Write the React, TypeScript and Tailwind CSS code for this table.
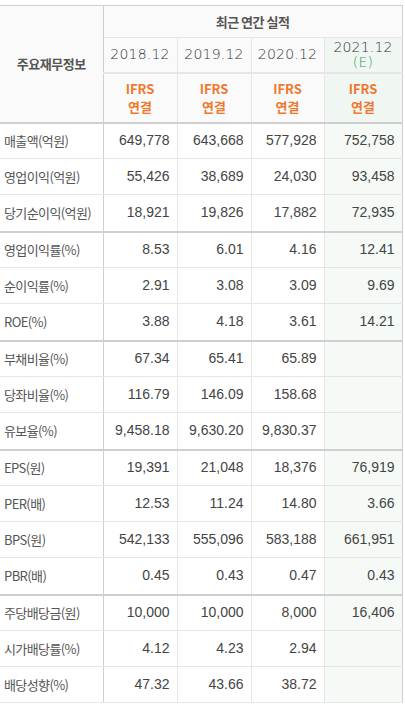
const FONT_KR = { fontFamily: '"Noto Sans CJK KR", "Noto Sans", sans-serif' };
const FONT_YEAR = { fontFamily: '"DejaVu Sans", sans-serif', fontWeight: 300 };

type Row = { label: string; values: string[]; lastInGroup?: boolean };

const rows: Row[] = [
  { label: "매출액(억원)", values: ["649,778", "643,668", "577,928", "752,758"] },
  { label: "영업이익(억원)", values: ["55,426", "38,689", "24,030", "93,458"] },
  { label: "당기순이익(억원)", values: ["18,921", "19,826", "17,882", "72,935"], lastInGroup: true },
  { label: "영업이익률(%)", values: ["8.53", "6.01", "4.16", "12.41"] },
  { label: "순이익률(%)", values: ["2.91", "3.08", "3.09", "9.69"] },
  { label: "ROE(%)", values: ["3.88", "4.18", "3.61", "14.21"], lastInGroup: true },
  { label: "부채비율(%)", values: ["67.34", "65.41", "65.89", ""] },
  { label: "당좌비율(%)", values: ["116.79", "146.09", "158.68", ""] },
  { label: "유보율(%)", values: ["9,458.18", "9,630.20", "9,830.37", ""], lastInGroup: true },
  { label: "EPS(원)", values: ["19,391", "21,048", "18,376", "76,919"] },
  { label: "PER(배)", values: ["12.53", "11.24", "14.80", "3.66"] },
  { label: "BPS(원)", values: ["542,133", "555,096", "583,188", "661,951"] },
  { label: "PBR(배)", values: ["0.45", "0.43", "0.47", "0.43"], lastInGroup: true },
  { label: "주당배당금(원)", values: ["10,000", "10,000", "8,000", "16,406"] },
  { label: "시가배당률(%)", values: ["4.12", "4.23", "2.94", ""] },
  { label: "배당성향(%)", values: ["47.32", "43.66", "38.72", ""] },
];

const years = ["2018.12", "2019.12", "2020.12"];

export default function App() {
  return (
    <div className="bg-white w-[405px] h-[707px] pt-[5px]" style={FONT_KR}>
      <table className="table-fixed border-collapse w-[402px] border-t border-r border-[#cfcfcf]">
        <colgroup>
          <col className="w-[103px]" />
          <col className="w-[74px]" />
          <col className="w-[74px]" />
          <col className="w-[73px]" />
          <col className="w-[78px]" />
        </colgroup>
        <thead>
          <tr className="h-[32px]">
            <th
              rowSpan={3}
              className="bg-[#fafafa] border-r border-b-2 border-[#cfcfcf] text-[13px] font-bold text-[#555] tracking-[-0.5px]"
            >
              주요재무정보
            </th>
            <th
              colSpan={4}
              className="bg-[#fafafa] border-b border-[#e6e6e6] text-[13px] font-bold text-[#555] tracking-[-0.5px]"
            >
              최근 연간 실적
            </th>
          </tr>
          <tr className="h-[35px]">
            {years.map((y) => (
              <th
                key={y}
                className="bg-[#fafafa] border-r border-b-2 border-[#e6e6e6] text-[14px] text-[#333] tracking-[0.2px]"
                style={FONT_YEAR}
              >
                {y}
              </th>
            ))}
            <th
              className="bg-[#f0f6f1] border-b-2 border-[#e6e6e6] text-[14px] text-[#333] leading-[15px] tracking-[0.2px]"
              style={FONT_YEAR}
            >
              2021.12
              <br />
              <span className="text-[#3a9a5a]">(E)</span>
            </th>
          </tr>
          <tr className="h-[50px]">
            {[0, 1, 2, 3].map((i) => (
              <th
                key={i}
                className={
                  i === 3
                    ? "bg-[#f0f6f1] border-b-2 border-[#cfcfcf] text-[13px] font-bold text-[#f0782d] leading-[18px]"
                    : "bg-[#fafafa] border-r border-r-[#e6e6e6] border-b-2 border-b-[#cfcfcf] text-[13px] font-bold text-[#f0782d] leading-[18px]"
                }
              >
                IFRS
                <br />
                연결
              </th>
            ))}
          </tr>
        </thead>
        <tbody>
          {rows.map((r) => (
            <tr key={r.label} className={r.lastInGroup ? "h-[37px]" : "h-[36px]"}>
              <td
                className={
                  "pl-[4px] text-[13px] text-[#555] tracking-[-0.6px] whitespace-nowrap border-r border-[#cfcfcf] " +
                  (r.lastInGroup ? "border-b-2 border-b-[#cfcfcf]" : "border-b border-b-[#e6e6e6]")
                }
              >
                {r.label}
              </td>
              {r.values.map((v, i) => (
                <td
                  key={i}
                  className={
                    "text-right pr-[7px] text-[14px] text-[#444] " +
                    (i === 3 ? "bg-[#f5faf6] " : "border-r border-r-[#e6e6e6] ") +
                    (r.lastInGroup ? "border-b-2 border-b-[#cfcfcf]" : "border-b border-b-[#e6e6e6]")
                  }
                  style={{ fontFamily: '"Liberation Sans", Arial, sans-serif' }}
                >
                  {v}
                </td>
              ))}
            </tr>
          ))}
        </tbody>
      </table>
    </div>
  );
}
